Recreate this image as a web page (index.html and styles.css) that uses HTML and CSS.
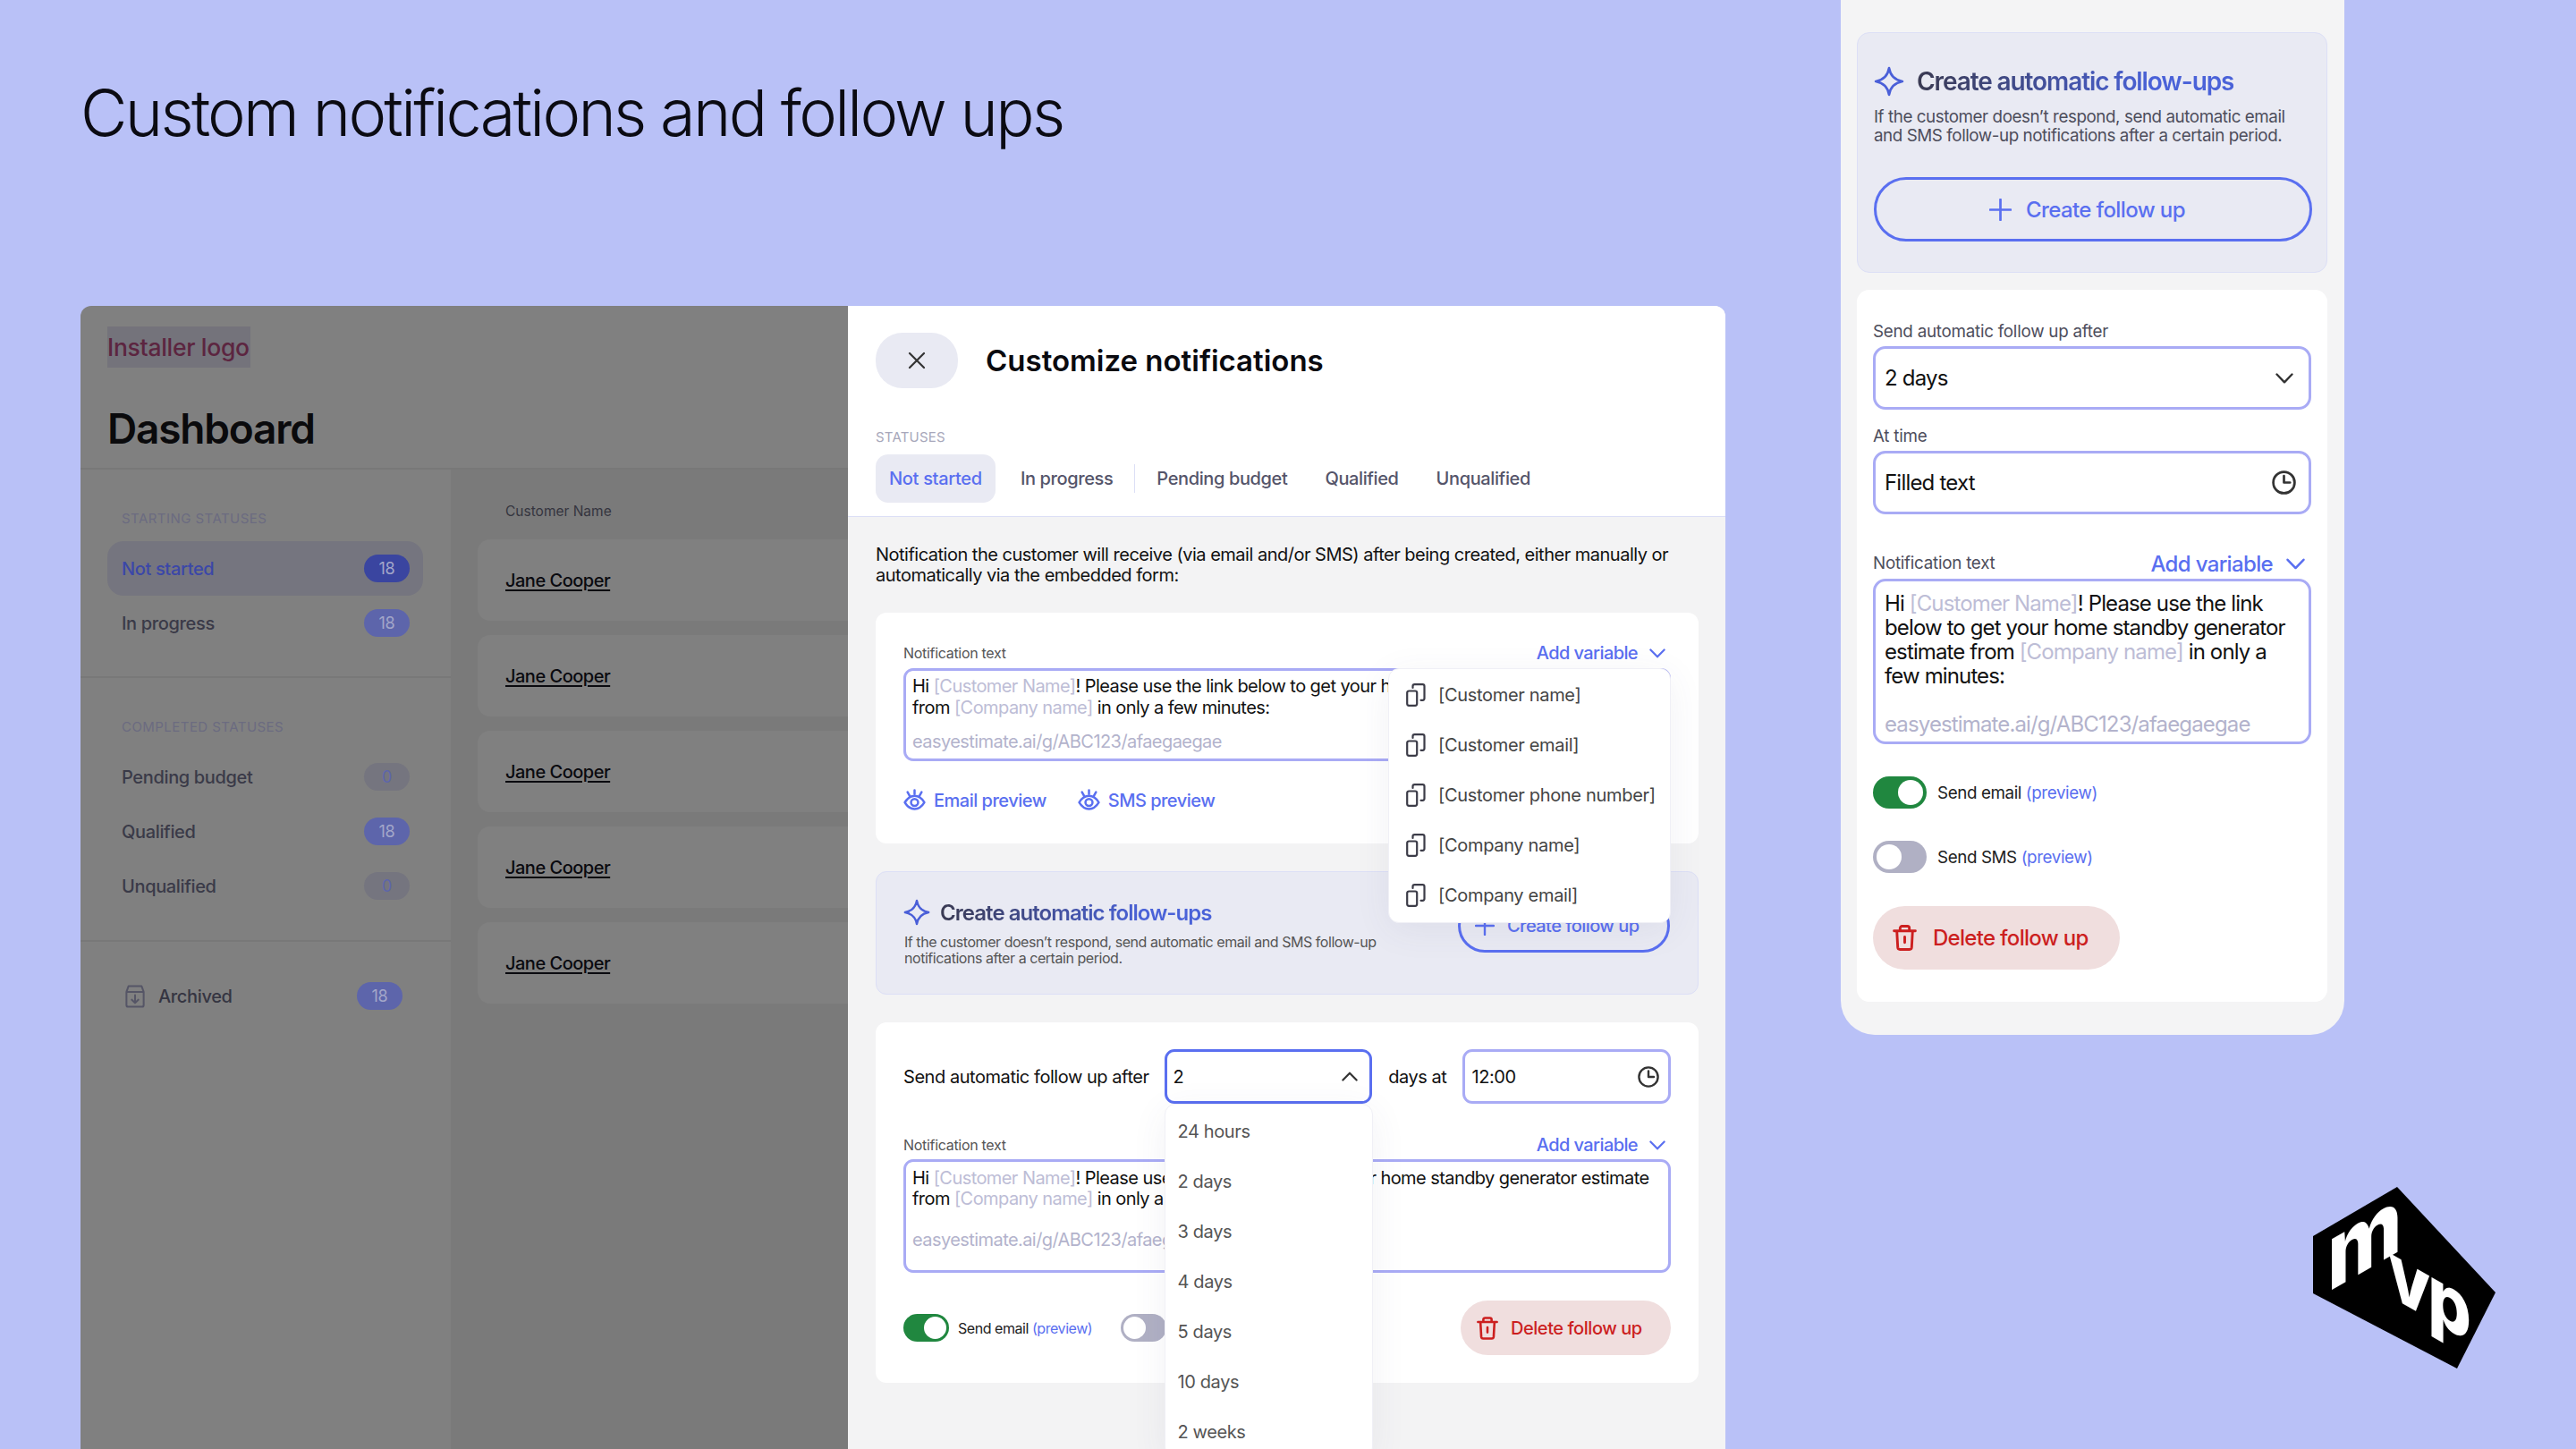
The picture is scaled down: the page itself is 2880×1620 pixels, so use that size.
FILE: index.html
```html
<!DOCTYPE html>
<html lang="en">
<head>
<meta charset="utf-8">
<title>Custom notifications and follow ups</title>
<link rel="stylesheet" href="styles.css">
</head>
<body>
<svg class="defs" width="0" height="0" aria-hidden="true">
  <defs>
    <symbol id="i-copy" viewBox="0 0 22 26"><path d="M1.2 10.5a2 2 0 0 1 2-2h7a2 2 0 0 1 2 2v12.3a2 2 0 0 1-2 2h-7a2 2 0 0 1-2-2z" fill="none" stroke="currentColor" stroke-width="2.2"/><path d="M7.5 5V3.2a2 2 0 0 1 2-2h9a2 2 0 0 1 2 2v13.6a2 2 0 0 1-2 2h-2" fill="none" stroke="currentColor" stroke-width="2.2" stroke-linecap="round"/></symbol>
    <symbol id="i-eye" viewBox="0 0 24 24"><path d="M1.500 14.500C4.500 9.500 8 7.500 12 7.500s7.500 2 10.500 7c-3 5-6.500 7-10.500 7s-7.500-2-10.500-7z" fill="none" stroke="currentColor" stroke-width="2.400" stroke-linejoin="round"/><circle cx="12" cy="14.500" r="3.800" fill="none" stroke="currentColor" stroke-width="2.400"/><path d="M4.500 3.500l2.300 4M19.500 3.500l-2.300 4M12 1.500v4" fill="none" stroke="currentColor" stroke-width="2.400" stroke-linecap="round"/></symbol>
    <symbol id="i-star" viewBox="0 0 32 32"><path d="M16 2c1.3 8 5.6 12.4 14 14-8.400 1.600-12.700 6-14 14-1.300-8-5.600-12.400-14-14 8.400-1.600 12.700-6 14-14z" fill="none" stroke="currentColor" stroke-width="2.6" stroke-linejoin="round"/></symbol>
    <symbol id="i-plus" viewBox="0 0 24 24"><path d="M12 1v22M1 12h22" fill="none" stroke="currentColor" stroke-width="2.6" stroke-linecap="round"/></symbol>
    <symbol id="i-clock" viewBox="0 0 24 24"><circle cx="12" cy="12" r="10.600" fill="none" stroke="currentColor" stroke-width="2.4"/><path d="M12 5.500V12h6" fill="none" stroke="currentColor" stroke-width="2.4" stroke-linecap="round" stroke-linejoin="round"/></symbol>
    <symbol id="i-chev" viewBox="0 0 20 12"><path d="M1.500 1.500L10 10.300l8.500-8.800" fill="none" stroke="currentColor" stroke-width="2.4" stroke-linecap="round" stroke-linejoin="round"/></symbol>
    <symbol id="i-trash" viewBox="0 0 26 28"><path d="M1.500 6.500h23M8 6.500V3.500a2 2 0 0 1 2-2h6a2 2 0 0 1 2 2v3M4.500 6.500l1 18a2.300 2.300 0 0 0 2.300 2h10.400a2.300 2.300 0 0 0 2.300-2l1-18M13 13v6" fill="none" stroke="currentColor" stroke-width="2.800" stroke-linecap="round" stroke-linejoin="round"/></symbol>
    <symbol id="i-x" viewBox="0 0 20 20"><path d="M2 2l16 16M18 2L2 18" fill="none" stroke="currentColor" stroke-width="2.200" stroke-linecap="round"/></symbol>
    <symbol id="i-box" viewBox="0 0 24 28"><path d="M1.500 8.500h21M4 1.500h16l2.500 7v16a2 2 0 0 1-2 2h-17a2 2 0 0 1-2-2v-16zM12 12.500v9M8 18l4 4 4-4" fill="none" stroke="currentColor" stroke-width="2.200" stroke-linecap="round" stroke-linejoin="round"/></symbol>
  </defs>
</svg>

<main class="slide">
  <div class="left">
    <h1 class="title">Custom notifications and follow ups</h1>
    <div class="window">
      <section class="dash">
        <header class="dash-head">
          <div class="installer">Installer logo</div>
          <h2 class="dash-title">Dashboard</h2>
        </header>
        <div class="dash-body">
          <aside class="side">
            <div class="side-sec">
              <div class="side-label">STARTING STATUSES</div>
              <div class="side-row is-active"><span>Not started</span><span class="badge badge-dark">18</span></div>
              <div class="side-row"><span>In progress</span><span class="badge">18</span></div>
            </div>
            <div class="side-sec side-mid">
              <div class="side-label">COMPLETED STATUSES</div>
              <div class="side-row"><span>Pending budget</span><span class="badge badge-zero">0</span></div>
              <div class="side-row"><span>Qualified</span><span class="badge">18</span></div>
              <div class="side-row"><span>Unqualified</span><span class="badge badge-zero">0</span></div>
            </div>
            <div class="side-sec side-last">
              <div class="side-row side-archived"><svg class="ic-box"><use href="#i-box"/></svg><span class="arch-text">Archived</span><span class="badge">18</span></div>
            </div>
          </aside>
          <div class="list">
            <div class="list-head">Customer Name</div>
            <div class="list-card"><a class="name">Jane Cooper</a></div>
            <div class="list-card"><a class="name">Jane Cooper</a></div>
            <div class="list-card"><a class="name">Jane Cooper</a></div>
            <div class="list-card"><a class="name">Jane Cooper</a></div>
            <div class="list-card"><a class="name">Jane Cooper</a></div>
          </div>
        </div>
      </section>

      <section class="modal">
        <header class="modal-head">
          <div class="modal-top">
            <button class="close"><svg class="ic-x"><use href="#i-x"/></svg></button>
            <h2 class="modal-title">Customize notifications</h2>
          </div>
          <div class="tabs-label">STATUSES</div>
          <div class="tabs">
            <span class="tab is-active">Not started</span>
            <span class="tab">In progress</span>
            <span class="tab-sep"></span>
            <span class="tab">Pending budget</span>
            <span class="tab">Qualified</span>
            <span class="tab">Unqualified</span>
          </div>
        </header>
        <div class="modal-body">
          <p class="intro">Notification the customer will receive (via email and/or SMS) after being created, either manually or<br>automatically via the embedded form:</p>

          <div class="card card-notif">
            <div class="field-row">
              <span class="field-label">Notification text</span>
              <span class="add-var">Add variable<svg class="ic-chev"><use href="#i-chev"/></svg></span>
            </div>
            <div class="ta ta-1">
              <div>Hi <span class="ph">[Customer Name]</span>! Please use the link below to get your home standby generator estimate</div>
              <div>from <span class="ph">[Company name]</span> in only a few minutes:</div>
              <div class="ta-link">easyestimate.ai/g/ABC123/afaegaegae</div>
            </div>
            <div class="previews">
              <span class="preview"><svg class="ic-eye"><use href="#i-eye"/></svg>Email preview</span>
              <span class="preview"><svg class="ic-eye"><use href="#i-eye"/></svg>SMS preview</span>
            </div>
            <div class="var-menu">
              <div class="var-item"><svg class="ic-copy"><use href="#i-copy"/></svg>[Customer name]</div>
              <div class="var-item"><svg class="ic-copy"><use href="#i-copy"/></svg>[Customer email]</div>
              <div class="var-item"><svg class="ic-copy"><use href="#i-copy"/></svg>[Customer phone number]</div>
              <div class="var-item"><svg class="ic-copy"><use href="#i-copy"/></svg>[Company name]</div>
              <div class="var-item"><svg class="ic-copy"><use href="#i-copy"/></svg>[Company email]</div>
            </div>
          </div>

          <div class="promo">
            <div class="promo-text">
              <div class="promo-head"><svg class="ic-star"><use href="#i-star"/></svg><span class="grad">Create automatic follow-ups</span></div>
              <p class="promo-desc">If the customer doesn’t respond, send automatic email and SMS follow-up<br>notifications after a certain period.</p>
            </div>
            <button class="btn-outline"><svg class="ic-plus"><use href="#i-plus"/></svg>Create follow up</button>
          </div>

          <div class="card card-follow">
            <div class="after-row">
              <span class="after-text">Send automatic follow up after</span>
              <div class="select is-open">
                <span>2</span><svg class="ic-chev up"><use href="#i-chev"/></svg>
                <div class="day-menu">
                  <div class="day-item">24 hours</div>
                  <div class="day-item">2 days</div>
                  <div class="day-item">3 days</div>
                  <div class="day-item">4 days</div>
                  <div class="day-item">5 days</div>
                  <div class="day-item">10 days</div>
                  <div class="day-item">2 weeks</div>
                </div>
              </div>
              <span class="after-text">days at</span>
              <div class="select time"><span>12:00</span><svg class="ic-clock"><use href="#i-clock"/></svg></div>
            </div>
            <div class="field-row field-row-2">
              <span class="field-label">Notification text</span>
              <span class="add-var">Add variable<svg class="ic-chev"><use href="#i-chev"/></svg></span>
            </div>
            <div class="ta ta-2">
              <div>Hi <span class="ph">[Customer Name]</span>! Please use the link below to get your home standby generator estimate</div>
              <div>from <span class="ph">[Company name]</span> in only a few minutes:</div>
              <div class="ta-link">easyestimate.ai/g/ABC123/afaegaegae</div>
            </div>
            <div class="follow-foot">
              <div class="tg-row"><span class="toggle on"></span><span class="tg-text">Send email <em>(preview)</em></span></div>
              <div class="tg-row tg-second"><span class="toggle"></span><span class="tg-text">Send SMS <em>(preview)</em></span></div>
              <button class="btn-del"><svg class="ic-trash"><use href="#i-trash"/></svg>Delete follow up</button>
            </div>
          </div>
        </div>
      </section>
    </div>
  </div>

  <aside class="phone">
    <div class="p-promo">
      <div class="p-head"><svg class="p-star"><use href="#i-star"/></svg><span class="grad">Create automatic follow-ups</span></div>
      <p class="p-desc">If the customer doesn’t respond, send automatic email<br>and SMS follow-up notifications after a certain period.</p>
      <button class="p-create"><svg class="p-plus"><use href="#i-plus"/></svg>Create follow up</button>
    </div>
    <div class="p-card">
      <div class="p-label">Send automatic follow up after</div>
      <div class="p-input"><span>2 days</span><svg class="p-chev"><use href="#i-chev"/></svg></div>
      <div class="p-label p-label-gap">At time</div>
      <div class="p-input"><span>Filled text</span><svg class="p-clock"><use href="#i-clock"/></svg></div>
      <div class="p-notif-row">
        <span class="p-label">Notification text</span>
        <span class="p-add">Add variable<svg class="p-chev-b"><use href="#i-chev"/></svg></span>
      </div>
      <div class="p-ta">
        <div>Hi <span class="ph">[Customer Name]</span>! Please use the link</div>
        <div>below to get your home standby generator</div>
        <div>estimate from <span class="ph">[Company name]</span> in only a</div>
        <div>few minutes:</div>
        <div class="p-link">easyestimate.ai/g/ABC123/afaegaegae</div>
      </div>
      <div class="p-tg"><span class="p-toggle on"></span><span class="p-tg-text">Send email <em>(preview)</em></span></div>
      <div class="p-tg p-tg-2"><span class="p-toggle"></span><span class="p-tg-text">Send SMS <em>(preview)</em></span></div>
      <button class="p-del"><svg class="p-trash"><use href="#i-trash"/></svg>Delete follow up</button>
    </div>
  </aside>

  <svg class="logo" viewBox="0 0 204 203" role="img" aria-label="mvp">
    <polygon points="94,0 204,118 161,203 0,119 0,55" fill="#000"/>
    <text class="logo-m" transform="matrix(.866 -.5 0 1 16 118)">m</text>
    <text class="logo-vp" transform="matrix(.866 .5 0 1 84 121)">vp</text>
  </svg>
</main>
</body>
</html>
```

FILE: styles.css
```css
* { box-sizing: border-box; }
html, body { margin: 0; padding: 0; }
body { font-family: "Inter", "Liberation Sans", sans-serif; color: #111; }
button { font-family: inherit; cursor: pointer; }
h1, h2, p { margin: 0; }
em { font-style: normal; }
.defs { position: absolute; }

.slide {
  width: 2880px; height: 1620px; display: flex; overflow: hidden;
  position: relative; background: #b9c1f7;
}
.left { width: 1839px; margin-left: 90px; display: flex; flex-direction: column; flex: none; }
.title {
  height: 342px; padding-top: 81px; font-size: 72px; line-height: 90px;
  font-weight: 300; letter-spacing: -2.7px; color: #0b0b12;
}
.window { display: flex; flex: 1; min-height: 0; border-radius: 12px 12px 0 0; overflow: hidden; }

/* dimmed dashboard */
.dash { width: 858px; flex: none; background: #808080; display: flex; flex-direction: column; }
.dash-head { height: 183px; padding: 23px 30px 0; border-bottom: 2px solid #787878; }
.installer {
  width: 160px; height: 46px; background: #74737b; color: #5c2540;
  font-size: 26.500px; line-height: 46px; font-weight: 500; letter-spacing: -.3px; white-space: nowrap;
}
.dash-title { margin-top: 40px; font-size: 46px; line-height: 56px; font-weight: 600; letter-spacing: -1.2px; color: #0a0a0c; }
.dash-body { display: flex; flex: 1; min-height: 0; }
.side { width: 414px; flex: none; }
.side-sec { padding: 45px 31px 29px 30px; border-bottom: 2px solid #787878; }
.side-mid { padding-bottom: 30px; }
.side-last { padding-top: 30px; border-bottom: 0; }
.side-label { height: 20px; margin-bottom: 15px; padding-left: 16px; font-size: 15px; line-height: 20px; color: #6b6b80; letter-spacing: .45px; }
.side-row {
  height: 61px; display: flex; align-items: center; justify-content: space-between;
  padding: 0 15px 0 16px; border-radius: 18px; font-size: 20px; font-weight: 500; color: #3a3a48; letter-spacing: -.35px;
}
.side-row.is-active { background: #75757f; color: #3b47a8; }
.side-archived { padding: 0 23px 0 20px; color: #353542; }
.ic-box { width: 22px; height: 26px; color: #555566; flex: none; }
.arch-text { margin-left: 15px; margin-right: auto; }
.badge {
  width: 51px; height: 31px; border-radius: 16px; background: #5d65ab; color: #a3a7c9;
  font-size: 18px; line-height: 31px; text-align: center; font-weight: 400;
}
.badge-dark { background: #3a45a0; }
.badge-zero { background: #75757f; color: #5d65ab; }
.list { flex: 1; background: #7a7a7a; padding: 37px 0 0 30px; }
.list-head { height: 20px; margin-bottom: 21px; padding-left: 31px; font-size: 15.500px; line-height: 20px; color: #35353f; }
.list-card { height: 91px; margin-bottom: 16px; padding-left: 31px; background: #808080; border-radius: 14px 0 0 14px; display: flex; align-items: center; }
.name { font-size: 20px; font-weight: 500; color: #0a0a0f; text-decoration: underline; text-underline-offset: 3px; letter-spacing: -.5px; }

/* modal */
.modal { width: 981px; flex: none; background: #f3f3f4; display: flex; flex-direction: column; }
.modal-head { background: #fff; padding: 30px 31px 15px; border-bottom: 1px solid #dcdff6; }
.modal-top { display: flex; align-items: center; }
.close { width: 92px; height: 62px; border: 0; border-radius: 30px; background: #e9eaf3; display: flex; align-items: center; justify-content: center; padding: 0; color: #333; }
.ic-x { width: 20px; height: 20px; }
.modal-title { margin-left: 31px; font-size: 33px; font-weight: 600; letter-spacing: 0; color: #0a0a0f; }
.tabs-label { margin-top: 45px; height: 20px; font-size: 15px; line-height: 20px; color: #a7a7ba; letter-spacing: .2px; }
.tabs { margin-top: 9px; display: flex; align-items: center; gap: 10px; }
.tab { height: 54px; padding: 0 16px; border-radius: 14px; font-size: 20px; line-height: 54px; color: #55556a; letter-spacing: -.38px; font-weight: 500; white-space: nowrap; }
.tab.is-active { background: #e9eaf3; color: #5a6ff0; padding: 0 15px; margin-right: 2px; letter-spacing: -.3px; }
.tab-sep { width: 1px; height: 32px; background: #dcdff6; margin: 0 -2px; }
.modal-body { padding: 31px 30px 0 31px; }
.intro { font-size: 20px; line-height: 23px; color: #111; letter-spacing: -.5px; }

.card { position: relative; background: #fff; border-radius: 12px; padding-left: 31px; padding-right: 31px; }
.card-notif { height: 258px; margin-top: 30px; padding-top: 33px; z-index: 2; }
.field-row { display: flex; justify-content: space-between; align-items: center; height: 24px; }
.field-label { font-size: 16px; color: #555; letter-spacing: -.3px; }
.add-var { display: flex; align-items: center; font-size: 20px; font-weight: 500; color: #5a6ff0; letter-spacing: -.6px; padding-right: 6px; }
.ic-chev { width: 18px; height: 11px; margin-left: 13px; }
.ta { margin-top: 5px; padding: 5px 7px; border: 3px solid #a9abf5; border-radius: 11px; background: #fff; font-size: 20px; line-height: 24px; color: #111; letter-spacing: -.57px; white-space: nowrap; overflow: hidden; }
.ph { color: #bdbdd6; }
.ta-1 { height: 104px; }
.ta-2 { height: 127px; margin-top: 4px; padding-top: 7px; }
.ta-2 > div { line-height: 23px; }
.ta-link { margin-top: 14px; color: #b3b3cc; }
.ta-2 .ta-link { margin-top: 23px; }
.previews { margin-top: 32px; display: flex; gap: 35px; }
.preview { display: flex; align-items: center; font-size: 20px; font-weight: 500; color: #5a6ff0; letter-spacing: -.5px; }
.ic-eye { width: 25px; height: 25px; margin-right: 9px; margin-top: -2px; }
.var-menu {
  position: absolute; top: 62px; right: 31px; width: 316px; height: 285px; padding-top: 1px;
  background: #fff; border-radius: 12px; border: 1px solid #f0f0f6;
  box-shadow: 0 8px 40px rgba(70, 70, 110, .07);
}
.var-item { height: 56px; display: flex; align-items: center; padding-left: 19px; font-size: 20px; color: #444; letter-spacing: -.32px; white-space: nowrap; }
.ic-copy { width: 22px; height: 26px; margin-right: 14px; color: #3c3c48; flex: none; }

.promo { position: relative; height: 138px; margin-top: 31px; padding: 30px 31px 0; display: flex; justify-content: space-between; background: #e9eaf3; border: 1px solid #dcdff6; border-radius: 12px; }
.promo-head { display: flex; align-items: center; height: 30px; }
.ic-star { width: 30px; height: 30px; margin-right: 11px; color: #4a5fd8; margin-left: -1px; }
.grad { font-size: 24px; font-weight: 600; letter-spacing: -.95px; background: linear-gradient(90deg, #3a3a52 0%, #4a62d8 75%); -webkit-background-clip: text; background-clip: text; color: transparent; white-space: nowrap; }
.promo-desc { margin-top: 9px; font-size: 16px; line-height: 18px; color: #555; letter-spacing: -.45px; }
.btn-outline { align-self: flex-start; width: 237px; height: 60px; border: 3px solid #5a6ff0; border-radius: 30px; background: transparent; color: #5a6ff0; font-size: 20px; font-weight: 500; letter-spacing: -.55px; display: flex; align-items: center; justify-content: flex-start; gap: 14px; padding: 0 0 0 16px; white-space: nowrap; }
.ic-plus { width: 22px; height: 22px; }

.card-follow { height: 403px; margin-top: 31px; padding-top: 30px; }
.after-row { display: flex; align-items: center; height: 61px; }
.after-text { font-size: 20px; letter-spacing: -.45px; white-space: nowrap; color: #111; }
.select { position: relative; width: 233px; height: 61px; margin-left: 17px; margin-right: 18px; border: 3px solid #a9abf5; border-radius: 11px; display: flex; align-items: center; justify-content: space-between; padding: 0 13px 0 7px; font-size: 20px; background: #fff; letter-spacing: -.4px; }
.select.is-open { border-color: #5a6ff0; }
.select.time { width: 233px; margin-right: 0; margin-left: 18px; padding-right: 10px; }
.ic-chev.up { transform: rotate(180deg); color: #333; margin-right: 0; }
.ic-clock { width: 24px; height: 24px; color: #333; }
.day-menu { position: absolute; top: 58px; left: -3px; width: 233px; background: #fff; border: 1px solid #f0f0f6; border-radius: 12px; box-shadow: 0 8px 40px rgba(70, 70, 110, .07); padding-top: 2px; z-index: 3; }
.day-item { height: 56px; line-height: 56px; padding-left: 14px; font-size: 20px; color: #555; letter-spacing: -.4px; }
.field-row-2 { margin-top: 34px; }
.follow-foot { position: relative; margin-top: 31px; display: flex; align-items: center; height: 61px; }
.tg-row { display: flex; align-items: center; }
.tg-second { margin-left: 32px; }
.toggle { width: 51px; height: 31px; border-radius: 16px; background: #b0b0c4; position: relative; flex: none; }
.toggle::after { content: ""; position: absolute; left: 3px; top: 3px; width: 25px; height: 25px; border-radius: 50%; background: #fff; }
.toggle.on { background: #20873f; }
.toggle.on::after { left: auto; right: 3px; }
.tg-text { margin-left: 10px; font-size: 16px; letter-spacing: -.45px; color: #222; white-space: nowrap; }
.tg-text em { color: #5a6ff0; }
.btn-del { margin-left: auto; width: 235px; height: 61px; border: 0; border-radius: 31px; background: #f0dede; color: #cc1f1f; font-size: 20px; font-weight: 500; letter-spacing: -.45px; display: flex; align-items: center; justify-content: flex-start; gap: 14px; padding: 0 0 0 18px; white-space: nowrap; }
.ic-trash { width: 24px; height: 26px; }

/* mobile panel */
.phone { width: 563px; height: 1157px; margin-left: 129px; padding: 36px 19px 0 18px; flex: none; background: #f4f4f5; border-radius: 0 0 38px 38px; }
.p-promo { height: 269px; padding: 37px 18px 0; background: #e9eaf3; border: 1px solid #dcdff6; border-radius: 14px; }
.p-head { display: flex; align-items: center; height: 34px; }
.p-star { width: 34px; height: 34px; margin-right: 14px; color: #4a5fd8; }
.p-head .grad { font-size: 28px; letter-spacing: -1.1px; }
.p-desc { margin-top: 12px; font-size: 18.800px; line-height: 21px; color: #4e4e5c; letter-spacing: -.43px; white-space: nowrap; }
.p-create { margin-top: 36px; width: 490px; height: 72px; border: 3px solid #5a6ff0; border-radius: 36px; background: transparent; color: #5a6ff0; font-size: 24px; font-weight: 500; display: flex; align-items: center; justify-content: flex-start; gap: 16px; padding: 0 0 0 126px; letter-spacing: -.6px; }
.p-plus { width: 25px; height: 25px; }
.p-card { margin-top: 19px; height: 796px; padding: 36px 18px 0; background: #fff; border-radius: 14px; }
.p-label { font-size: 18.800px; line-height: 22px; color: #4e4e5c; letter-spacing: -.25px; display: block; }
.p-label-gap { margin-top: 19px; }
.p-input { margin-top: 5px; height: 71px; border: 3px solid #a9abf5; border-radius: 14px; display: flex; align-items: center; justify-content: space-between; padding: 0 14px 0 10px; font-size: 24px; color: #111; letter-spacing: -.8px; }
.p-chev { width: 20px; height: 12px; margin-right: 3px; color: #333; }
.p-clock { width: 27px; height: 27px; color: #333; }
.p-notif-row { margin-top: 44px; height: 22px; display: flex; align-items: center; justify-content: space-between; }
.p-add { display: flex; align-items: center; font-size: 24px; font-weight: 500; color: #5a6ff0; letter-spacing: -.65px; padding-right: 7px; }
.p-chev-b { width: 21px; height: 13px; margin-left: 15px; }
.p-ta { margin-top: 6px; height: 185px; padding: 11px 10px 0; border: 3px solid #a9abf5; border-radius: 14px; font-size: 24px; line-height: 27px; color: #111; letter-spacing: -.87px; white-space: nowrap; }
.p-link { margin-top: 27px; color: #b3b3cc; }
.p-tg { margin-top: 36px; display: flex; align-items: center; }
.p-tg-2 { margin-top: 36px; }
.p-toggle { width: 60px; height: 36px; border-radius: 18px; background: #b0b0c4; position: relative; flex: none; }
.p-toggle::after { content: ""; position: absolute; top: 4px; left: 4px; width: 28px; height: 28px; border-radius: 50%; background: #fff; }
.p-toggle.on { background: #20873f; }
.p-toggle.on::after { left: auto; right: 4px; }
.p-tg-text { margin-left: 12px; font-size: 18.800px; color: #222; letter-spacing: -.4px; }
.p-tg-text em { color: #5a6ff0; }
.p-del { margin-top: 37px; width: 276px; height: 71px; border: 0; border-radius: 36px; background: #f0dede; color: #cc1f1f; font-size: 24px; font-weight: 500; display: flex; align-items: center; justify-content: flex-start; gap: 18px; padding: 0 0 0 22px; letter-spacing: -.7px; }
.p-trash { width: 27px; height: 29px; }

.logo { position: absolute; left: 2586px; top: 1327px; width: 204px; height: 203px; }
.logo-m, .logo-vp { font-family: "Inter", sans-serif; font-weight: 800; fill: #fff; }
.logo-m { font-size: 104px; }
.logo-vp { font-size: 88px; letter-spacing: -3px; }
```
